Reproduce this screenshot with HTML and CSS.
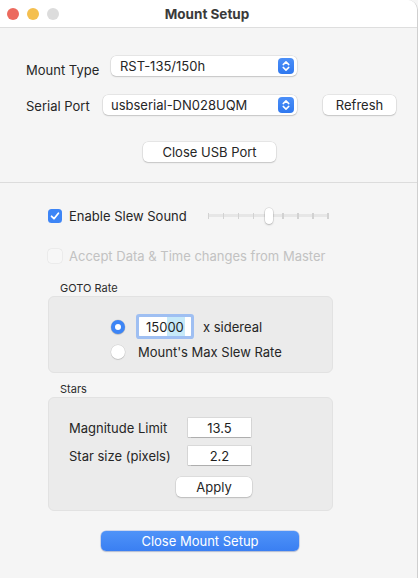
FILE: index.html
```html
<!DOCTYPE html>
<html lang="en">
<head>
  <meta charset="UTF-8" />
  <meta name="viewport" content="width=device-width, initial-scale=1.0" />
  <title>Mount Setup</title>
  <link rel="stylesheet" href="styles.css">
</head>
<body>
  <div class="window">
    <div class="titlebar">
      <div class="lights">
        <span class="light red"></span>
        <span class="light yellow"></span>
        <span class="light gray"></span>
      </div>
      <div class="title">Mount Setup</div>
      <div class="lights-spacer"></div>
    </div>

    <div class="top">
      <div class="row row-mount">
        <label class="lbl">Mount Type</label>
        <div class="popup popup-mount">
          <span>RST-135/150h</span>
          <span class="stepper">
            <svg width="16" height="16" viewBox="0 0 16 16"><path d="M5.2 6.6 8 3.9l2.8 2.7M5.2 9.4 8 12.1l2.8-2.7" fill="none" stroke="#fff" stroke-width="1.5" stroke-linecap="round" stroke-linejoin="round"/></svg>
          </span>
        </div>
      </div>
      <div class="row row-serial">
        <label class="lbl">Serial Port</label>
        <div class="popup popup-serial">
          <span>usbserial-DN028UQM</span>
          <span class="stepper">
            <svg width="16" height="16" viewBox="0 0 16 16"><path d="M5.2 6.6 8 3.9l2.8 2.7M5.2 9.4 8 12.1l2.8-2.7" fill="none" stroke="#fff" stroke-width="1.5" stroke-linecap="round" stroke-linejoin="round"/></svg>
          </span>
        </div>
        <button class="btn btn-refresh">Refresh</button>
      </div>
      <div class="center-row">
        <button class="btn btn-usb">Close USB Port</button>
      </div>
    </div>

    <div class="bottom">
      <div class="check-row">
        <span class="checkbox on">
          <svg width="14" height="14" viewBox="0 0 14 14"><path d="M3.6 7.3 6 9.7l4.4-5.4" fill="none" stroke="#fff" stroke-width="1.8" stroke-linecap="round" stroke-linejoin="round"/></svg>
        </span>
        <span class="check-label">Enable Slew Sound</span>
        <div class="slider">
          <div class="track"></div>
          <div class="ticks">
            <i></i><i></i><i></i><i></i><i></i><i></i><i></i><i></i><i></i>
          </div>
          <div class="thumb"></div>
        </div>
      </div>
      <div class="check-row disabled">
        <span class="checkbox off"></span>
        <span class="check-label">Accept Data &amp; Time changes from Master</span>
      </div>

      <div class="group-title goto-title">GOTO Rate</div>
      <div class="group goto">
        <div class="radio-row">
          <span class="radio on"></span>
          <input class="field rate" type="text" value="15000">
          <span class="txt">x sidereal</span>
        </div>
        <div class="radio-row second">
          <span class="radio"></span>
          <span class="txt">Mount's Max Slew Rate</span>
        </div>
      </div>

      <div class="group-title">Stars</div>
      <div class="group stars">
        <div class="star-row">
          <span class="txt star-lbl">Magnitude Limit</span>
          <input class="field num" type="text" value="13.5">
        </div>
        <div class="star-row">
          <span class="txt star-lbl">Star size (pixels)</span>
          <input class="field num" type="text" value="2.2">
        </div>
        <div class="apply-row">
          <button class="btn btn-apply">Apply</button>
        </div>
      </div>

      <div class="center-row">
        <button class="btn btn-primary">Close Mount Setup</button>
      </div>
    </div>
  </div>
</body>
</html>
```

FILE: styles.css
```css
* {
  box-sizing: border-box;
}
body {
  margin: 0;
  font-family: Inter, "Noto Sans", sans-serif;
  font-size: 13px;
  color: #262626;
  background: #f5f5f5;
}
.window {
  width: 418px;
  height: 578px;
  background: #f5f5f5;
  border-right: 1px solid #cfcfcf;
  border-radius: 0 10px 0 0;
  overflow: hidden;
}
.titlebar {
  height: 28px;
  background: #ffffff;
  border-bottom: 1px solid #dedede;
  display: flex;
  align-items: center;
}
.lights {
  display: flex;
  gap: 8px;
  padding-left: 7px;
  width: 64px;
}
.lights-spacer {
  width: 64px;
}
.light {
  width: 12px;
  height: 12px;
  border-radius: 50%;
}
.red { background: #ec6a5e; }
.yellow { background: #f4bf4f; }
.gray { background: #dcdcdc; }
.title {
  flex: 1;
  text-align: center;
  font-weight: 700;
  font-size: 13.5px;
  color: #3a3a3a;
  padding-right: 3px;
}

.top {
  padding: 28px 0 20px 26px;
  border-bottom: 1px solid #dcdcdc;
}
.row {
  display: flex;
  align-items: center;
  height: 20px;
}
.row-serial {
  margin-top: 19px;
}
.lbl {
  width: 85px;
  padding-top: 8px;
}
.row-serial .lbl {
  width: 77px;
  padding-top: 2px;
}
.popup {
  height: 20px;
  background: #fff;
  border-radius: 5px;
  box-shadow: 0 0 0 0.5px rgba(0,0,0,0.12), 0 1px 1.5px rgba(0,0,0,0.15);
  display: flex;
  align-items: center;
  justify-content: space-between;
  padding: 0 3px 0 9px;
}
.popup-mount { width: 186px; }
.popup-serial { width: 194px; padding-left: 8px; }
.stepper {
  width: 16px;
  height: 16px;
  border-radius: 4px;
  background: linear-gradient(#4b8ff8, #2f78ef);
  display: flex;
}
.btn {
  font-family: inherit;
  font-size: 13px;
  color: #262626;
  height: 20px;
  background: #fff;
  border: none;
  border-radius: 5px;
  box-shadow: 0 0 0 0.5px rgba(0,0,0,0.12), 0 1px 1.5px rgba(0,0,0,0.15);
  padding: 0;
}
.btn-refresh {
  width: 73px;
  margin-left: 26px;
}
.center-row {
  display: flex;
  justify-content: center;
}
.top .center-row {
  margin-top: 27px;
  padding-right: 24px;
}
.btn-usb {
  width: 133px;
}

.bottom {
  padding: 26px 0 0 48px;
}
.check-row {
  display: flex;
  align-items: center;
  height: 14px;
}
.check-row.disabled {
  margin-top: 26px;
  color: #c2c2c2;
}
.checkbox {
  width: 14px;
  height: 14px;
  border-radius: 3.5px;
  display: flex;
  margin-right: 7px;
}
.checkbox.on {
  background: #3d85f6;
}
.checkbox.off {
  background: #f7f7f7;
  box-shadow: 0 0 0 0.5px rgba(0,0,0,0.08);
}
.check-label {
  line-height: 14px;
}
.slider {
  position: relative;
  width: 121px;
  height: 16px;
  margin-left: 21px;
}
.track {
  position: absolute;
  left: 0;
  right: 0;
  top: 6px;
  height: 3px;
  background: #e6e6e6;
  border-radius: 2px;
}
.ticks {
  position: absolute;
  left: 0;
  right: 0;
  top: 4.5px;
  display: flex;
  justify-content: space-between;
}
.ticks i {
  width: 1.5px;
  height: 6px;
  background: #d2d2d2;
}
.thumb {
  position: absolute;
  left: 57px;
  top: 0;
  width: 8px;
  height: 16px;
  border-radius: 4px;
  background: #fff;
  box-shadow: 0 0 0 0.5px rgba(0,0,0,0.15), 0 1px 2px rgba(0,0,0,0.2);
}

.group-title {
  font-size: 11px;
  margin: 9px 0 0 12px;
  line-height: 14px;
  color: #2c2c2c;
}
.goto-title {
  margin-top: 18px;
}
.group {
  width: 285px;
  background: #ebebeb;
  border: 1px solid #e2e2e2;
  border-radius: 6px;
  margin-top: 1px;
}
.goto {
  height: 77px;
  padding: 18px 0 0 62px;
}
.radio-row {
  display: flex;
  align-items: center;
  height: 23px;
}
.radio-row.second {
  margin-top: 4px;
  height: 20px;
}
.radio {
  width: 14px;
  height: 14px;
  border-radius: 50%;
  background: #fff;
  box-shadow: 0 0 0 0.5px rgba(0,0,0,0.12), 0 1px 1px rgba(0,0,0,0.12);
  margin-right: 13px;
}
.radio.on {
  border: 4.5px solid #3d85f6;
  background: #fff;
}
.field {
  font-family: inherit;
  font-size: 13px;
  color: #1e1e1e;
  background: #fff;
  border: none;
  outline: none;
  box-shadow: 0 0 0 0.5px rgba(0,0,0,0.15), 0 0.5px 1px rgba(0,0,0,0.2);
  padding: 0;
  height: 19px;
}
.rate {
  width: 52px;
  margin-left: 1px;
  padding-left: 7px;
  box-shadow: 0 0 0 3px #9fbff2;
  border-radius: 1px;
  background: linear-gradient(90deg, #fff 0, #fff 28px, #c6e9f9 28px, #c6e9f9 46px, #fff 46px);
}
.radio-row .txt {
  margin-left: 12px;
}
.radio-row.second .txt {
  margin-left: 0;
}

.stars {
  height: 114px;
  padding: 20px 0 0 20px;
}
.star-row {
  display: flex;
  align-items: center;
  height: 19px;
}
.star-row + .star-row {
  margin-top: 9px;
}
.star-lbl {
  width: 119px;
}
.num {
  width: 63px;
  text-align: center;
}
.apply-row {
  margin-top: 12px;
  padding-left: 107px;
}
.btn-apply {
  width: 76px;
}

.bottom .center-row {
  margin-top: 20px;
  justify-content: flex-start;
  padding-left: 53px;
}
.btn-primary {
  width: 198px;
  height: 20px;
  color: #fff;
  background: linear-gradient(#4f93f8, #3a7ff2);
  box-shadow: 0 0 0 0.5px rgba(0,60,200,0.3), 0 1px 1.5px rgba(0,0,0,0.15);
}
```
